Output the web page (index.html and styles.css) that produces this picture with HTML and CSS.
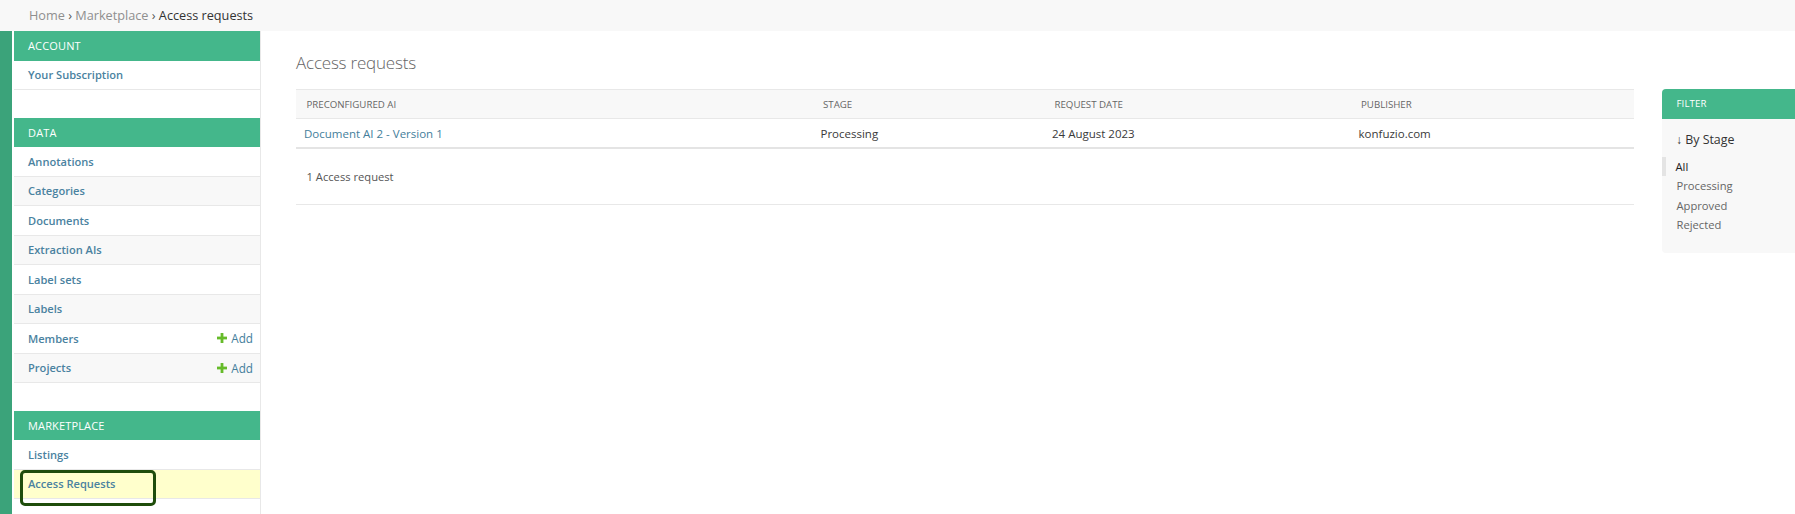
FILE: index.html
```html
<!DOCTYPE html>
<html lang="en">
<head>
<meta charset="utf-8">
<title>Access requests</title>
<link rel="stylesheet" href="styles.css">
</head>
<body>
<div class="breadcrumbs"><a class="crumb" href="#">Home</a><span class="sep">›</span><a class="crumb" href="#">Marketplace</a><span class="sep">›</span><span class="current">Access requests</span></div>
<div class="layout">
  <div class="strip"></div>
  <nav class="sidebar">
    <section class="module">
      <h2 class="module-title">Account</h2>
      <ul class="rows">
        <li class="row"><a class="row-link" href="#">Your Subscription</a></li>
      </ul>
    </section>
    <section class="module">
      <h2 class="module-title">Data</h2>
      <ul class="rows">
        <li class="row"><a class="row-link" href="#">Annotations</a></li>
        <li class="row"><a class="row-link" href="#">Categories</a></li>
        <li class="row"><a class="row-link" href="#">Documents</a></li>
        <li class="row"><a class="row-link" href="#">Extraction AIs</a></li>
        <li class="row"><a class="row-link" href="#">Label sets</a></li>
        <li class="row"><a class="row-link" href="#">Labels</a></li>
        <li class="row"><a class="row-link" href="#">Members</a><a class="add-link" href="#"><svg class="add-icon" viewBox="0 0 10 10" width="10" height="10"><rect x="3.6" y="0" width="2.8" height="10" fill="#66bb2a"/><rect x="0" y="3.6" width="10" height="2.8" fill="#66bb2a"/></svg>Add</a></li>
        <li class="row"><a class="row-link" href="#">Projects</a><a class="add-link" href="#"><svg class="add-icon" viewBox="0 0 10 10" width="10" height="10"><rect x="3.6" y="0" width="2.8" height="10" fill="#66bb2a"/><rect x="0" y="3.6" width="10" height="2.8" fill="#66bb2a"/></svg>Add</a></li>
      </ul>
    </section>
    <section class="module">
      <h2 class="module-title">Marketplace</h2>
      <ul class="rows">
        <li class="row"><a class="row-link" href="#">Listings</a></li>
        <li class="row row-current"><a class="row-link" href="#">Access Requests</a><span class="focus-ring"></span></li>
      </ul>
    </section>
  </nav>
  <main class="main">
    <h1 class="title">Access requests</h1>
    <div class="changelist">
      <div class="results">
        <table class="result-list">
          <thead>
            <tr>
              <th class="col-ai">Preconfigured AI</th>
              <th class="col-stage">Stage</th>
              <th class="col-date">Request date</th>
              <th class="col-pub">Publisher</th>
            </tr>
          </thead>
          <tbody>
            <tr>
              <td><a class="cell-link" href="#">Document AI 2 - Version 1</a></td>
              <td>Processing</td>
              <td>24 August 2023</td>
              <td>konfuzio.com</td>
            </tr>
          </tbody>
        </table>
        <p class="paginator">1 Access request</p>
      </div>
      <aside class="filter">
        <h2 class="filter-title">Filter</h2>
        <h3 class="filter-heading"><span class="arrow">↓</span> By Stage</h3>
        <ul class="filter-list">
          <li class="filter-item filter-selected">All</li>
          <li class="filter-item">Processing</li>
          <li class="filter-item">Approved</li>
          <li class="filter-item">Rejected</li>
        </ul>
      </aside>
    </div>
  </main>
</div>
</body>
</html>
```

FILE: styles.css
```css
* { box-sizing: border-box; }

html, body {
  margin: 0;
  padding: 0;
  background: #fff;
  font-family: "Open Sans", "Liberation Sans", sans-serif;
  color: #333;
}

a { text-decoration: none; }

.breadcrumbs {
  height: 31px;
  line-height: 30px;
  background: #f8f8f8;
  padding-left: 29px;
  font-size: 12.7px;
  color: #333;
  white-space: nowrap;
}
.crumb { color: #8f8f8f; }
.sep { color: #555; margin: 0 3.3px; }
.current { color: #333; }

.layout {
  display: flex;
  min-height: calc(100vh - 31px);
}

.strip {
  flex: none;
  width: 12px;
  background: #3ba37a;
}

.sidebar {
  flex: none;
  width: 247px;
  margin-left: 2px;
  border-right: 1px solid #e8e8e8;
}

.module { margin-bottom: 27.5px; }

.module-title {
  margin: 0;
  height: 29.5px;
  line-height: 29.5px;
  padding-left: 14px;
  background: #44b78b;
  color: #fff;
  font-size: 11px;
  font-weight: 400;
  letter-spacing: 0.15px;
  text-transform: uppercase;
}

.rows {
  list-style: none;
  margin: 0;
  padding: 0;
}

.row {
  position: relative;
  display: flex;
  align-items: center;
  justify-content: space-between;
  height: 29.5px;
  padding: 0 7px 0 14px;
  border-bottom: 1px solid #e8e8e8;
  background: #fff;
  font-size: 11.5px;
}
.row:nth-child(even) { background: #f8f8f8; }
.row.row-current { background: #ffffcc; }

.row-link {
  color: #4a82a0;
  font-size: 11.1px;
  font-weight: 600;
}

.add-link {
  display: flex;
  align-items: center;
  gap: 4px;
  color: #447e9b;
  font-size: 11.7px;
}
.add-icon { display: block; }

.focus-ring {
  position: absolute;
  left: 6px;
  top: 0.5px;
  width: 136px;
  height: 36px;
  border: 3.5px solid #1f4d0b;
  border-radius: 5px;
  pointer-events: none;
}

.main {
  flex: 1;
  min-width: 0;
  padding: 20px 0 0 35px;
}

.title {
  margin: 0 0 14px;
  height: 24px;
  line-height: 24px;
  font-size: 17px;
  font-weight: 300;
  letter-spacing: -0.2px;
  color: #666;
}

.changelist {
  display: flex;
  align-items: flex-start;
  gap: 28px;
}

.results {
  flex: none;
  width: 1338px;
}

.result-list {
  width: 100%;
  border-collapse: separate;
  border-spacing: 0;
  table-layout: fixed;
}

.result-list th {
  height: 30px;
  padding: 0 0 0 10.5px;
  background: #f8f8f8;
  border-top: 1px solid #e8e8e8;
  border-bottom: 1px solid #e8e8e8;
  text-align: left;
  font-size: 9.7px;
  font-weight: 400;
  color: #666;
  text-transform: uppercase;
  white-space: nowrap;
}
.col-ai { width: 516.5px; }
.col-stage { width: 231.5px; }
.col-date { width: 306.5px; }

.result-list td {
  height: 30px;
  padding: 0 0 0 8px;
  border-bottom: 2px solid #e4e4e4;
  font-size: 11.5px;
  color: #3a3a3a;
  white-space: nowrap;
}
.cell-link { color: #447e9b; }

.paginator {
  margin: 0;
  height: 56px;
  line-height: 55px;
  padding-left: 10.5px;
  border-bottom: 1px solid #e8e8e8;
  font-size: 11.2px;
  color: #555;
}

.filter {
  flex: 1;
  min-width: 0;
  background: #f8f8f8;
  border-radius: 4px 0 0 4px;
  padding-bottom: 18px;
}

.filter-title {
  margin: 0;
  height: 30px;
  line-height: 30px;
  padding-left: 14.5px;
  background: #44b78b;
  border-radius: 4px 0 0 0;
  color: #fff;
  font-size: 9.7px;
  font-weight: 400;
  text-transform: uppercase;
  letter-spacing: 0.1px;
}

.filter-heading {
  margin: 11px 0 0;
  height: 20px;
  line-height: 20px;
  padding-left: 14px;
  font-size: 12.4px;
  font-weight: 400;
  color: #333;
  white-space: nowrap;
}
.arrow {
  font-family: "Liberation Sans", sans-serif;
  font-size: 12px;
}

.filter-list {
  list-style: none;
  margin: 6.5px 0 0;
  padding: 0;
}

.filter-item {
  height: 19.5px;
  line-height: 19.5px;
  padding-left: 14.5px;
  font-size: 11.2px;
  color: #666;
}
.filter-item.filter-selected {
  border-left: 4px solid #e4e4e4;
  padding-left: 9.5px;
  color: #222;
}
```
